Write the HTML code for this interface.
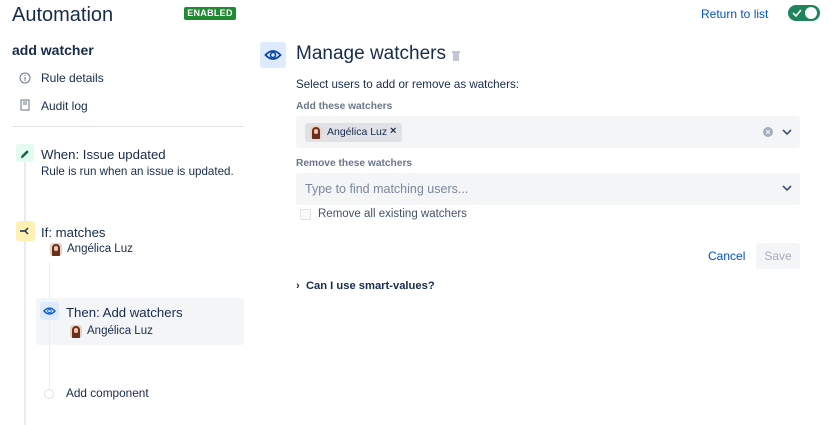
<!DOCTYPE html>
<html><head><meta charset="utf-8"><style>
*{margin:0;padding:0;box-sizing:border-box}
body{width:838px;height:425px;overflow:hidden;background:#fff;font-family:"Liberation Sans",sans-serif;color:#172b4d;position:relative}
.a{position:absolute;white-space:nowrap}
.av{position:absolute;width:12px;height:13px;border-radius:3px;background:#e8d3c6;overflow:hidden}
.av:before{content:"";position:absolute;left:2px;top:1px;width:8px;height:12px;border-radius:4px 4px 0 0;background:#6b2f1e}
.av:after{content:"";position:absolute;left:4px;top:3px;width:4px;height:5px;border-radius:2px;background:#f1c7ae}
</style></head><body>
<div class="a" style="left:12px;top:3px;font-size:20px;font-weight:500;line-height:24px">Automation</div>
<div class="a" style="left:184px;top:7px;width:52px;height:13px;background:#1f8a32;border-radius:2px;color:#fff;font-size:9px;font-weight:bold;text-align:center;line-height:13px;letter-spacing:.3px">ENABLED</div>
<div class="a" style="left:701px;top:6px;font-size:12px;color:#0052cc;line-height:16px">Return to list</div>
<div class="a" style="left:788px;top:5px;width:32px;height:16px;border-radius:8px;background:#1f845a"></div>
<div class="a" style="left:805px;top:7px;width:12px;height:12px;border-radius:6px;background:#fff"></div>
<svg class="a" style="left:792px;top:8px" width="10" height="10"><path d="M1 5l3 3 5-6" stroke="#fff" stroke-width="1.6" fill="none"/></svg>

<div class="a" style="left:12px;top:42px;font-size:14px;font-weight:bold;line-height:17px">add watcher</div>
<svg class="a" style="left:19px;top:72px" width="12" height="12"><circle cx="6" cy="6" r="5" stroke="#6b778c" fill="none"/><path d="M6 5v4M6 3v1" stroke="#6b778c"/></svg>
<div class="a" style="left:41px;top:70px;font-size:12px;line-height:16px">Rule details</div>
<svg class="a" style="left:20px;top:99px" width="10" height="12"><rect x="1" y="1" width="8" height="10" stroke="#6b778c" fill="none"/><path d="M3 3h4M3 5h4" stroke="#6b778c"/></svg>
<div class="a" style="left:41px;top:98px;font-size:12px;line-height:16px">Audit log</div>
<div class="a" style="left:12px;top:126px;width:232px;height:1px;background:#dfe1e6"></div>

<div class="a" style="left:24px;top:161px;width:2px;height:264px;background:#ebecf0"></div>
<div class="a" style="left:16px;top:144px;width:18px;height:18px;border-radius:3px;background:#e3fcef"></div>
<svg class="a" style="left:19px;top:147px" width="12" height="12"><path d="M3 9l5-5 1 1-5 5-1.5.5z" fill="#006644" stroke="#006644"/></svg>
<div class="a" style="left:41px;top:146px;font-size:13.2px;line-height:17px">When: Issue updated</div>
<div class="a" style="left:41px;top:164px;font-size:11.6px;line-height:15px">Rule is run when an issue is updated.</div>

<div class="a" style="left:16px;top:221px;width:19px;height:20px;border-radius:3px;background:#fff0b3"></div>
<svg class="a" style="left:19px;top:225px" width="12" height="12"><path d="M1 6h5M6 6l3-3M6 6l3 3" stroke="#172b4d" stroke-width="1.4" fill="none"/></svg>
<div class="a" style="left:41px;top:224px;font-size:13.2px;line-height:17px">If: matches</div>
<div class="av" style="left:50px;top:243px"></div>
<div class="a" style="left:67px;top:242px;font-size:11.5px;line-height:15px">Angélica Luz</div>
<div class="a" style="left:49px;top:262px;width:1px;height:133px;background:#ebecf0"></div>

<div class="a" style="left:36px;top:298px;width:208px;height:47px;background:#f4f5f7;border-radius:3px"></div>
<div class="a" style="left:49px;top:320px;width:1px;height:25px;background:#ebecf0"></div>
<div class="a" style="left:40px;top:302px;width:19px;height:18px;background:#deebff;border-radius:3px"></div>
<svg class="a" style="left:43px;top:305px" width="13" height="12"><path d="M1 6Q6.5 0 12 6Q6.5 12 1 6z" stroke="#0052cc" stroke-width="1.3" fill="none"/><circle cx="6.5" cy="6" r="1.8" stroke="#0052cc" fill="none"/></svg>
<div class="a" style="left:66px;top:304px;font-size:13.2px;line-height:17px">Then: Add watchers</div>
<div class="av" style="left:70px;top:325px"></div>
<div class="a" style="left:87px;top:324px;font-size:11.5px;line-height:15px">Angélica Luz</div>

<div class="a" style="left:44px;top:389px;width:10px;height:10px;border-radius:5px;border:1px solid #dfe1e6;background:#fff"></div>
<div class="a" style="left:66px;top:386px;font-size:11.8px;line-height:15px">Add component</div>

<div class="a" style="left:260px;top:42px;width:26px;height:26px;background:#deebff;border-radius:3px"></div>
<svg class="a" style="left:264px;top:48px" width="18" height="14"><path d="M1.5 7Q9 -1 16.5 7Q9 15 1.5 7z" stroke="#0747a6" stroke-width="1.8" fill="none"/><circle cx="9" cy="7" r="2.5" stroke="#0747a6" stroke-width="1.6" fill="none"/></svg>
<div class="a" style="left:296px;top:42px;font-size:19px;font-weight:500;line-height:24px">Manage watchers</div>
<svg class="a" style="left:451px;top:50px" width="10" height="12"><rect x="1" y="1" width="8" height="2" fill="#c1c7d0"/><rect x="2" y="3" width="6" height="8" fill="#c1c7d0"/></svg>
<div class="a" style="left:296px;top:77px;font-size:11.6px;line-height:15px">Select users to add or remove as watchers:</div>
<div class="a" style="left:296px;top:100px;font-size:10.2px;font-weight:bold;color:#6b778c;line-height:13px">Add these watchers</div>
<div class="a" style="left:296px;top:116px;width:504px;height:32px;background:#f4f5f7;border-radius:3px"></div>
<div class="a" style="left:305px;top:123px;width:97px;height:19px;background:#dfe1e6;border-radius:3px"></div>
<div class="av" style="left:310px;top:126px"></div>
<div class="a" style="left:327px;top:125px;font-size:10.5px;line-height:14px">Angélica Luz</div>
<div class="a" style="left:390px;top:124px;font-size:11px;font-weight:bold;line-height:14px">×</div>
<div class="a" style="left:763px;top:127px;width:10px;height:10px;border-radius:5px;background:#a5adba;color:#f4f5f7;font-size:9px;font-weight:bold;line-height:10px;text-align:center">×</div>
<svg class="a" style="left:782px;top:128px" width="10" height="8"><path d="M1 2l4 4 4-4" stroke="#42526e" stroke-width="1.6" fill="none"/></svg>
<div class="a" style="left:296px;top:157px;font-size:10.2px;font-weight:bold;color:#6b778c;line-height:13px">Remove these watchers</div>
<div class="a" style="left:296px;top:173px;width:504px;height:32px;background:#f4f5f7;border-radius:3px"></div>
<div class="a" style="left:305px;top:181px;font-size:12.5px;color:#7a869a;line-height:16px">Type to find matching users...</div>
<svg class="a" style="left:782px;top:184px" width="10" height="8"><path d="M1 2l4 4 4-4" stroke="#42526e" stroke-width="1.6" fill="none"/></svg>
<div class="a" style="left:300px;top:209px;width:11px;height:11px;border:1px solid #dfe1e6;border-radius:2px;background:#fafbfc"></div>
<div class="a" style="left:318px;top:207px;font-size:11.5px;color:#42526e;line-height:15px">Remove all existing watchers</div>
<div class="a" style="left:708px;top:249px;font-size:12px;color:#0052cc;line-height:15px">Cancel</div>
<div class="a" style="left:756px;top:243px;width:44px;height:26px;background:#f4f5f7;border-radius:3px;color:#a5adba;font-size:12px;text-align:center;line-height:26px">Save</div>
<div class="a" style="left:296px;top:279px;font-size:11.2px;font-weight:bold;line-height:14px">›&nbsp; Can I use smart-values?</div>
</body></html>
